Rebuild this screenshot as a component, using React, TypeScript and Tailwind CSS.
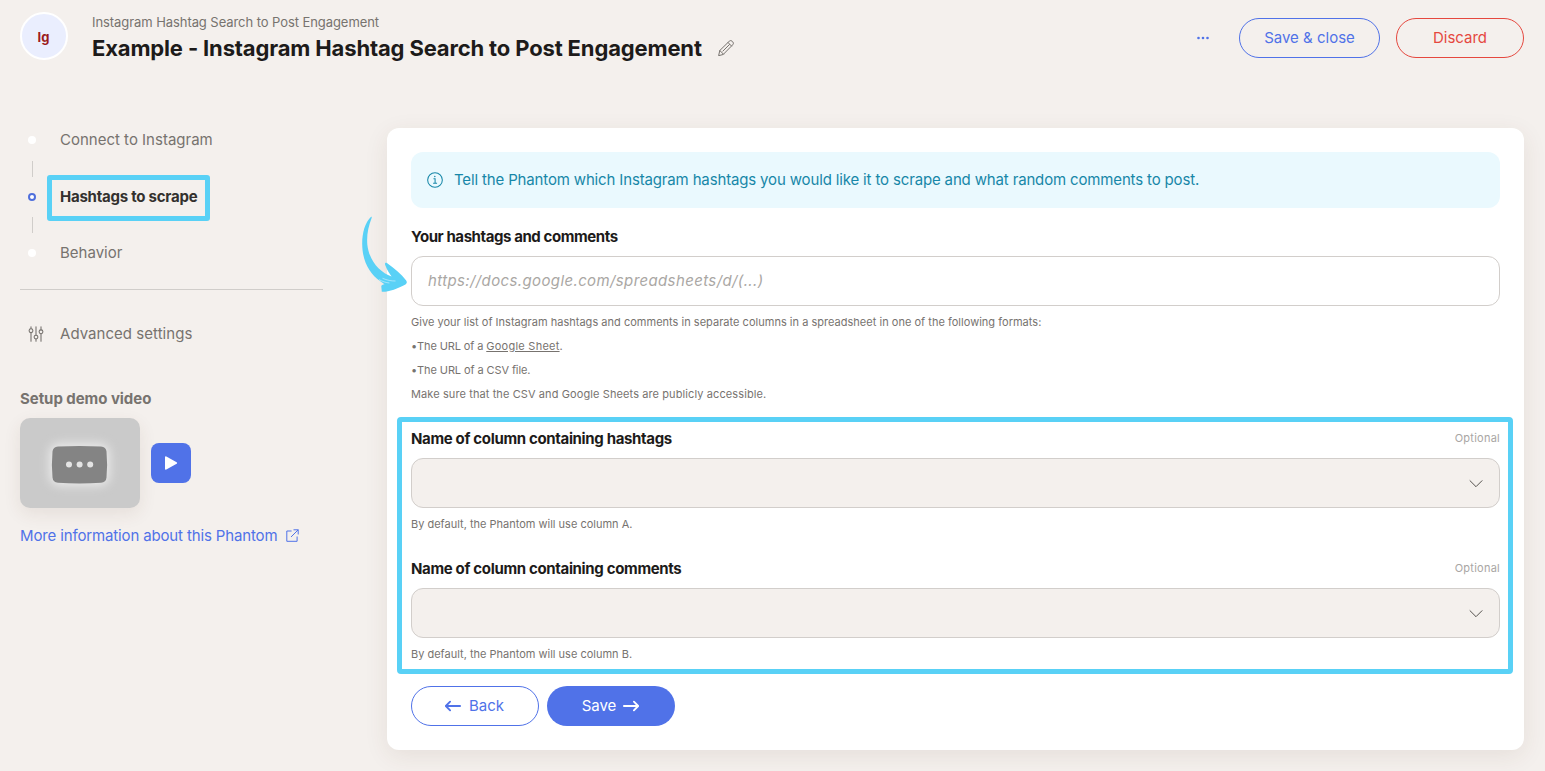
interface Step {
  label: string
  active?: boolean
}

interface ColumnFieldProps {
  label: string
  column: string
}

const STEPS: Step[] = [
  { label: 'Connect to Instagram' },
  { label: 'Hashtags to scrape', active: true },
  { label: 'Behavior' },
]

function PencilIcon() {
  return (
    <svg className="h-4 w-4" viewBox="0 0 16 16" fill="none" stroke="#77736f" strokeWidth="1" strokeLinejoin="round" strokeLinecap="round">
      <path d="M.7 15.3l1.1-4.8L11.2 1.3a2.2 2.2 0 0 1 3.1 0l.4.4a2.2 2.2 0 0 1 0 3.1L5.5 14.2z" />
      <path d="M1.8 10.5l3.7 3.7M4.9 11.1l6.6-6.6M10 2.5L13.5 6" />
    </svg>
  )
}

function SlidersIcon() {
  return (
    <svg className="h-4 w-4" viewBox="0 0 16 16" fill="none" stroke="#77736f" strokeWidth="1.1" strokeLinecap="round">
      <path d="M3 .7v2.1M3 6.6v8.7M8 .7v8.5M8 13v2.3M13 .7v3.2M13 7.7v7.6" />
      <circle cx="3" cy="4.7" r="1.9" />
      <circle cx="8" cy="11.1" r="1.9" />
      <circle cx="13" cy="5.8" r="1.9" />
    </svg>
  )
}

function InfoIcon() {
  return (
    <svg className="h-4 w-4" viewBox="0 0 17 17" fill="none" stroke="#1787a8" strokeWidth="1.1">
      <circle cx="8.5" cy="8.5" r="7.8" />
      <path d="M6.9 7.2h1.7v4.7M6.5 12h4.2" />
      <circle cx="8.3" cy="4.8" r=".8" fill="#1787a8" stroke="none" />
    </svg>
  )
}

function ArrowIcon({ flip = false }: { flip?: boolean }) {
  return (
    <svg className={`h-4 w-4 ${flip ? 'rotate-180' : ''}`} viewBox="0 0 16 16" fill="none" stroke="currentColor" strokeWidth="1.8" strokeLinecap="round" strokeLinejoin="round">
      <path d="M.9 8h14.2M10.9 3.6L15.2 8l-4.3 4.4" />
    </svg>
  )
}

function ExternalIcon() {
  return (
    <svg className="h-[13px] w-[13px]" viewBox="0 0 13 13" fill="none" stroke="#5072e8" strokeWidth="1" strokeLinecap="round" strokeLinejoin="round">
      <path d="M5.2 2H.8v10.3h10.3V7.9M7.9.8h4.3v4.3M12 1L5.3 7.7" />
    </svg>
  )
}

function VideoThumb() {
  return (
    <div className="h-[90px] w-[120px] overflow-hidden rounded-[10px] bg-[#cacaca] shadow-[0_6px_18px_rgba(90,50,30,0.09)]">
      <svg className="h-full w-full" viewBox="0 0 120 90">
        <defs>
          <filter id="glow" x="-40%" y="-40%" width="180%" height="180%">
            <feGaussianBlur stdDeviation="5" />
          </filter>
        </defs>
        <rect x="29" y="25" width="61" height="43" rx="11" fill="#e8e8e8" filter="url(#glow)" />
        <path d="M38 28.6q21.5-1.4 43 0 5 .4 5.5 5 1.2 13 0 26-.5 4.8-5.5 5.2-21.5 1.4-43 0-5-.4-5.500-5.2-1.2-13 0-26 .5-4.6 5.500-5z" fill="#848484" />
        <circle cx="49" cy="46.5" r="3" fill="#e4e4e4" />
        <circle cx="59.6" cy="46.5" r="3" fill="#e4e4e4" />
        <circle cx="70.2" cy="46.5" r="3" fill="#e4e4e4" />
      </svg>
    </div>
  )
}

function PointerArrow() {
  return (
    <svg className="pointer-events-none absolute -left-[27px] top-[87px] h-[80px] w-[50px]" viewBox="360 215 50 80" fill="#59d1f6">
      <path d="M371.3 216.5c-6.5 6-9.2 17-9.1 28 .3 18 8 29.5 17.8 36.5l4.5 3.2c-1.7.3-3.4.8-3.2 2.300l.5 5.3c5.8.5 16.5-3.3 23.2-7.100 2-1.2 2.300-2.600 1-4.500-4.600-6-11.200-11.300-19.100-17.100-1.700-.9-2.400.8-1.500 2.300 1.600 4.100 3.500 7.400 6.200 11-12-4-22.600-16-24.300-32-.7-9.500.8-17 4.500-26.900z" />
      <path d="M382.5 278.3c4.500 1.900 8.800 2.800 13 2.700M379 279.6c3.600 2 6.900 3 10.400 3.400" stroke="#d8f4fd" strokeWidth=".6" fill="none" />
    </svg>
  )
}

function Sidebar() {
  return (
    <aside className="w-[303px] shrink-0 text-[15px] leading-6 text-[#77736f]">
      <ul className="pt-px">
        {STEPS.map((step, i) => (
          <li key={step.label}>
            {i > 0 && <div className="ml-3 h-4 w-px bg-[#d0cdca]" />}
            <div className="flex h-[40.5px] items-center">
              <span
                className={step.active
                  ? 'ml-2 h-2 w-2 rounded-full border-2 border-[#4f6fdc] bg-white'
                  : 'ml-2 h-2 w-2 rounded-full bg-white'}
              />
              <div className="relative ml-6">
                <span className={step.active ? 'font-bold tracking-[-0.24px] text-[#33302e]' : ''}>{step.label}</span>
                {step.active && (
                  <div className="absolute -left-[13px] -top-[10px] h-[46px] w-[163px] rounded-[3px] border-[5px] border-[#59d1f6]" />
                )}
              </div>
            </div>
          </li>
        ))}
      </ul>

      <div className="mt-[15px] border-t border-[#d0cdca]" />

      <div className="mt-8 flex h-6 items-center pl-2">
        <SlidersIcon />
        <span className="ml-4 tracking-[0.04px]">Advanced settings</span>
      </div>

      <h3 className="mt-[41px] font-bold tracking-[-0.05px]">Setup demo video</h3>
      <div className="mt-[7px] flex items-center gap-[11px]">
        <VideoThumb />
        <button aria-label="Play" className="flex h-10 w-10 items-center justify-center rounded-lg bg-[#5072e8]">
          <svg className="h-4 w-4" viewBox="0 0 16 16" fill="#fff" stroke="#fff" strokeWidth="1.8" strokeLinejoin="round">
            <path d="M2.9 2.2L13.2 8 2.9 13.8z" />
          </svg>
        </button>
      </div>

      <a className="mt-4 flex items-center gap-[9px] tracking-[-0.14px] text-[#5072e8]">
        More information about this Phantom
        <ExternalIcon />
      </a>
    </aside>
  )
}

function ColumnField({ label, column }: ColumnFieldProps) {
  return (
    <div className="mt-[21px]">
      <div className="flex h-6 items-center justify-between">
        <label className="text-[15px] font-bold tracking-[-0.34px] text-[#1d1b1a]">{label}</label>
        <span className="-mt-px text-[11px] tracking-[0.25px] text-[#a9a6a4]">Optional</span>
      </div>
      <div className="mt-[7px] flex h-[50px] items-center justify-end rounded-[12px] border border-[#d2cecb] bg-[#f4f0ed] pr-4">
        <svg className="h-[14px] w-[14px]" viewBox="0 0 14 14" fill="none" stroke="#55514e" strokeWidth="1" strokeLinecap="round" strokeLinejoin="round">
          <path d="M1 4.7l6 6 6-6" />
        </svg>
      </div>
      <p className="mt-1 text-[11px] leading-6 text-[#77736f]">By default, the Phantom will use column {column}.</p>
    </div>
  )
}

export default function App() {
  return (
    <div className="min-h-[771px] bg-[#f4f0ed] font-['Inter',sans-serif]">
      <header className="flex h-[76px] items-center pl-5 pr-[21px]">
        <div className="mb-1 flex h-12 w-12 items-center justify-center rounded-full border-2 border-white bg-[#eaeefe] pr-px pt-[3px] text-[13px] font-bold text-[#9c1c1c]">
          Ig
        </div>
        <div className="mb-px ml-6">
          <div className="text-[13px] leading-5 tracking-[-0.07px] text-[#77736f]">Instagram Hashtag Search to Post Engagement</div>
          <div className="flex items-center">
            <h1 className="text-[22px] font-bold leading-8 tracking-[-0.15px] text-[#1d1b1a]">
              Example - Instagram Hashtag Search to Post Engagement
            </h1>
            <span className="ml-4"><PencilIcon /></span>
          </div>
        </div>
        <div className="ml-auto flex items-center text-[15px]">
          <svg className="mr-[30px] h-1 w-3" viewBox="0 0 12 4" fill="#5072e8">
            <circle cx="1.5" cy="2" r="1.3" />
            <circle cx="6" cy="2" r="1.3" />
            <circle cx="10.5" cy="2" r="1.3" />
          </svg>
          <button className="h-10 w-[141px] rounded-full border border-[#5072e8] text-[#5072e8]">Save &amp; close</button>
          <button className="ml-4 h-10 w-32 rounded-full border border-[#e5483f] text-[#e5483f]">Discard</button>
        </div>
      </header>

      <div className="flex pl-5 pr-[21px]">
        <div className="pt-[43px]"><Sidebar /></div>

        <main className="relative ml-16 mt-[52px] h-[622px] flex-1 rounded-[12px] bg-white p-6 text-[#77736f] shadow-[0_6px_24px_rgba(90,50,30,0.09)]">
          <div className="flex h-14 items-center rounded-[12px] bg-[#eaf9fe] pl-4">
            <InfoIcon />
            <span className="ml-[11px] text-[15px] tracking-[-0.15px] text-[#1787a8]">
              Tell the Phantom which Instagram hashtags you would like it to scrape and what random comments to post.
            </span>
          </div>

          <div className="mt-[17px]">
            <label className="block h-6 text-[15px] font-bold leading-6 tracking-[-0.42px] text-[#1d1b1a]">Your hashtags and comments</label>
            <input
              className="mt-[7px] block h-[50px] w-full rounded-[12px] border border-[#d2cecb] bg-white px-4 pb-px text-[15px] italic tracking-[0.38px] placeholder:text-[#aaa7a4]"
              placeholder="https://docs.google.com/spreadsheets/d/(...)"
            />
            <div className="mt-1 text-[11px] leading-6">
              <p className="tracking-[0.02px]">Give your list of Instagram hashtags and comments in separate columns in a spreadsheet in one of the following formats:</p>
              <p><span className="tracking-[-1.6px]">• </span><span className="tracking-[-0.12px]">The URL of a </span><span className="tracking-[0.25px] underline">Google Sheet</span>.</p>
              <p><span className="tracking-[-1.6px]">• </span><span className="tracking-[-0.1px]">The URL of a CSV file.</span></p>
              <p className="tracking-[0.1px]">Make sure that the CSV and Google Sheets are publicly accessible.</p>
            </div>
          </div>

          <div className="relative">
            <ColumnField label="Name of column containing hashtags" column="A" />
            <ColumnField label="Name of column containing comments" column="B" />
            <div className="pointer-events-none absolute -bottom-2 -left-[14px] -right-[13px] -top-[10px] rounded-[4px] border-[5px] border-[#59d1f6]" />
          </div>

          <div className="mt-5 flex gap-2 text-[15px]">
            <button className="flex h-10 w-32 items-center justify-center gap-2 rounded-full border border-[#5072e8] pr-px text-[#5072e8]">
              <ArrowIcon flip />
              Back
            </button>
            <button className="flex h-10 w-32 items-center justify-center gap-[7px] rounded-full bg-[#5072e8] pr-px text-white">
              Save
              <ArrowIcon />
            </button>
          </div>

          <PointerArrow />
        </main>
      </div>
    </div>
  )
}
